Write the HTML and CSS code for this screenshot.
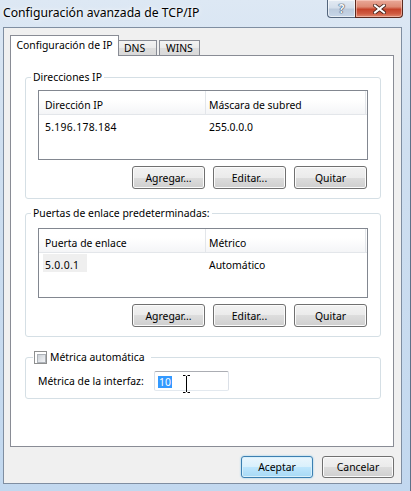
FILE: index.html
```html
<!DOCTYPE html>
<html lang="es">
<head>
<meta charset="utf-8">
<title>Configuración avanzada de TCP/IP</title>
<link rel="stylesheet" href="styles.css">
</head>
<body>
<div class="window">
  <div class="titlebar">
    <span class="title">Configuración avanzada de TCP/IP</span>
    <div class="caption">
      <span class="cap-btn help">?</span>
      <span class="cap-btn close"><svg width="13" height="10" viewBox="0 0 13 10"><path d="M2 1.5 L11 8.5 M11 1.5 L2 8.5" stroke="#47241c" stroke-width="3.8" stroke-linecap="square"/><path d="M2 1.5 L11 8.5 M11 1.5 L2 8.5" stroke="#ffffff" stroke-width="2" stroke-linecap="square"/></svg></span>
    </div>
  </div>
  <div class="client">
    <div class="tabs">
      <div class="tab active">Configuración de IP</div>
      <div class="tab dns">DNS</div>
      <div class="tab wins">WINS</div>
    </div>
    <div class="panel">
      <fieldset class="group g1">
        <legend>Direcciones IP</legend>
        <div class="list">
          <div class="list-head">
            <div class="cell c1">Dirección IP</div>
            <div class="cell c2">Máscara de subred</div>
          </div>
          <div class="list-row">
            <div class="cell c1"><span class="item">5.196.178.184</span></div>
            <div class="cell c2">255.0.0.0</div>
          </div>
        </div>
        <div class="btn-row">
          <button class="btn">Agregar...</button>
          <button class="btn">Editar...</button>
          <button class="btn">Quitar</button>
        </div>
      </fieldset>
      <fieldset class="group g2">
        <legend>Puertas de enlace predeterminadas:</legend>
        <div class="list">
          <div class="list-head">
            <div class="cell c1">Puerta de enlace</div>
            <div class="cell c2">Métrico</div>
          </div>
          <div class="list-row">
            <div class="cell c1"><span class="item selected">5.0.0.1</span></div>
            <div class="cell c2">Automático</div>
          </div>
        </div>
        <div class="btn-row">
          <button class="btn">Agregar...</button>
          <button class="btn">Editar...</button>
          <button class="btn">Quitar</button>
        </div>
      </fieldset>
      <fieldset class="group g3">
        <legend class="check-legend"><span class="check"></span><span class="check-label">Métrica automática</span></legend>
        <div class="metric-row">
          <span class="metric-label">Métrica de la interfaz:</span>
          <div class="field"><span class="sel">10</span><svg class="ibeam" width="9" height="18" viewBox="0 0 9 18"><path d="M1 0.5 H3.5 M5.5 0.5 H8 M4.5 1 V17 M1 17.5 H3.5 M5.5 17.5 H8" stroke="#000" stroke-width="1" fill="none"/></svg></div>
        </div>
      </fieldset>
    </div>
    <div class="footer">
      <button class="btn default">Aceptar</button>
      <button class="btn">Cancelar</button>
    </div>
  </div>
</div>
</body>
</html>
```

FILE: styles.css
```css
* { box-sizing: border-box; }

html, body {
  margin: 0;
  padding: 0;
}

body {
  width: 411px;
  height: 491px;
  overflow: hidden;
  font-family: "Noto Sans", "Open Sans", sans-serif;
  font-size: 10.4px;
  color: #000;
  background: #bcd4ee;
}

.window {
  width: 411px;
  height: 491px;
  display: flex;
  flex-direction: column;
  padding: 0 8px 0 3px;
  border-right: 1px solid #5f7189;
  background: linear-gradient(180deg, #dde8f4 0%, #cfdff0 30%, #c2d8ef 100%);
}

.titlebar {
  height: 27px;
  flex: none;
  display: flex;
  justify-content: space-between;
  align-items: flex-start;
}

.title {
  margin-top: 5px;
  font-size: 12.2px;
  line-height: 15px;
  color: #000;
  text-shadow: 0 0 6px rgba(255,255,255,0.9), 0 0 3px rgba(255,255,255,0.8);
}

.caption {
  display: flex;
  margin-right: -1px;
}

.cap-btn {
  height: 18px;
  display: flex;
  align-items: center;
  justify-content: center;
  border: 1px solid #53657c;
  border-top: none;
}

.help {
  width: 28px;
  border-radius: 0 0 0 4px;
  border-right: none;
  background: linear-gradient(180deg, #e3eaf3 0%, #d4dfeb 45%, #bccbdd 55%, #c7d6e8 100%);
  box-shadow: inset 0 0 0 1px rgba(255,255,255,0.6);
  font-weight: bold;
  font-size: 12px;
  line-height: 12px;
  color: #f6f8fb;
  text-shadow: 0 0 1px #33435a, 0 0 1px #33435a, 0 0 1px #33435a;
}

.close {
  width: 48px;
  border-color: #5b2a1f;
  border-radius: 0 0 4px 0;
  background: linear-gradient(180deg, #e9a999 0%, #de8a74 40%, #c5432a 55%, #cf5b41 80%, #e0896f 100%);
  box-shadow: inset 0 0 0 1px rgba(255,220,210,0.5);
}

.client {
  height: 457px;
  flex: none;
  border: 1px solid #7f8ea1;
  background: #f0f0f0;
  padding: 7px 7px 0 6px;
  display: flex;
  flex-direction: column;
}

.tabs {
  height: 20px;
  flex: none;
  display: flex;
  align-items: flex-end;
  position: relative;
  z-index: 1;
}

.tab {
  height: 15px;
  border: 1px solid #898c95;
  border-bottom: none;
  background: linear-gradient(180deg, #f3f3f3 0%, #ebebeb 50%, #dedede 50%, #d9d9d9 100%);
  line-height: 15px;
  white-space: nowrap;
}

.tab.active {
  width: 109px;
  height: 21px;
  margin-bottom: -1px;
  background: #fff;
  text-align: center;
  line-height: 19px;
}

.tab.dns {
  width: 38px;
  border-left: none;
  padding-left: 5px;
}

.tab.wins {
  width: 41px;
  margin-left: 2px;
  padding-left: 6px;
}

.panel {
  height: 392px;
  flex: none;
  border: 1px solid #898c95;
  background: #fff;
  padding: 0 12px 0 14px;
  display: flex;
  flex-direction: column;
}

.group {
  margin: 0;
  min-width: 0;
  border: 1px solid #d5dfe5;
  border-radius: 3px;
  padding: 0 12px 9px 12px;
}

.group legend {
  padding: 0 2px;
  margin-left: -7px;
  line-height: 14px;
  height: 14px;
}

.g1 { margin-top: 14px; padding-top: 6px; }
.g2 { margin-top: 7px; padding-top: 8px; }
.g3 { margin-top: 13px; padding-top: 7px; padding-bottom: 7px; }

.list {
  height: 70px;
  border: 1px solid #828790;
  background: #fff;
}

.list-head {
  height: 24px;
  display: flex;
  border-bottom: 1px solid #e3e6ea;
  background: linear-gradient(180deg, #ffffff 0%, #ffffff 40%, #f4f5f7 100%);
}

.list-head .cell {
  padding-top: 7px;
  line-height: 14px;
  border-right: 1px solid #e3e6ea;
}

.c1 {
  width: 167px;
  padding-left: 6px;
}

.c2 {
  width: 160px;
  padding-left: 3px;
}

.list-row {
  display: flex;
  margin-top: 1px;
  height: 18px;
}

.list-row .cell {
  line-height: 14px;
  padding-top: 4px;
}

.list-row .c1 {
  padding-left: 4px;
}

.item {
  display: inline-block;
  height: 18px;
  margin-top: -4px;
  padding: 4px 8px 0 2px;
  letter-spacing: 0.3px;
}

.item.selected {
  background: #efefef;
}

.btn-row {
  display: flex;
  justify-content: flex-end;
  gap: 8px;
  margin-top: 6px;
  padding-right: 1px;
}

.btn {
  width: 73px;
  height: 23px;
  margin: 0;
  padding: 0;
  font: inherit;
  color: #000;
  border: 1px solid #707070;
  border-radius: 3px;
  background: linear-gradient(180deg, #f2f2f2 0%, #ebebeb 50%, #dddddd 50%, #cfcfcf 100%);
  box-shadow: inset 0 0 0 1px #fbfbfb;
  line-height: 20px;
}

.check-legend {
  display: flex;
  align-items: center;
  padding: 0 6px 0 1px !important;
  margin-left: -5px !important;
}

.check {
  width: 13px;
  height: 13px;
  border: 1px solid #8e8f8f;
  background: #fff;
  padding: 2px;
}

.check::after {
  content: "";
  display: block;
  width: 100%;
  height: 100%;
  border: 1px solid #adb2b8;
  background: linear-gradient(135deg, #cdd1d6 0%, #e3e6ea 60%, #f1f2f4 100%);
}

.check-label {
  margin-left: 3px;
}

.metric-row {
  display: flex;
  align-items: center;
  height: 20px;
}

.metric-label {
  width: 116px;
  flex: none;
}

.field {
  position: relative;
  width: 75px;
  height: 20px;
  border: 1px solid #dbe0e7;
  border-top-color: #abadb3;
  border-bottom-color: #e3e9ef;
  border-radius: 2px;
  background: #fff;
  padding: 4px 0 0 3px;
}

.sel {
  display: inline-block;
  height: 12px;
  line-height: 12px;
  padding: 0 1px;
  background: #3399ff;
  color: #fff;
  vertical-align: top;
}

.ibeam {
  position: absolute;
  left: 27px;
  top: 3px;
}

.footer {
  display: flex;
  justify-content: flex-end;
  gap: 9px;
  margin-top: 9px;
}

.footer .btn {
  width: 72px;
  height: 22px;
  line-height: 19px;
}

.btn.default {
  border-color: #3c7fb1;
  background: linear-gradient(180deg, #eaf6fd 0%, #d9f0fc 50%, #bee6fd 50%, #a7d9f5 100%);
  box-shadow: inset 0 0 0 1px #d8f0fb, 0 0 2px #7ec4ea;
}
```
